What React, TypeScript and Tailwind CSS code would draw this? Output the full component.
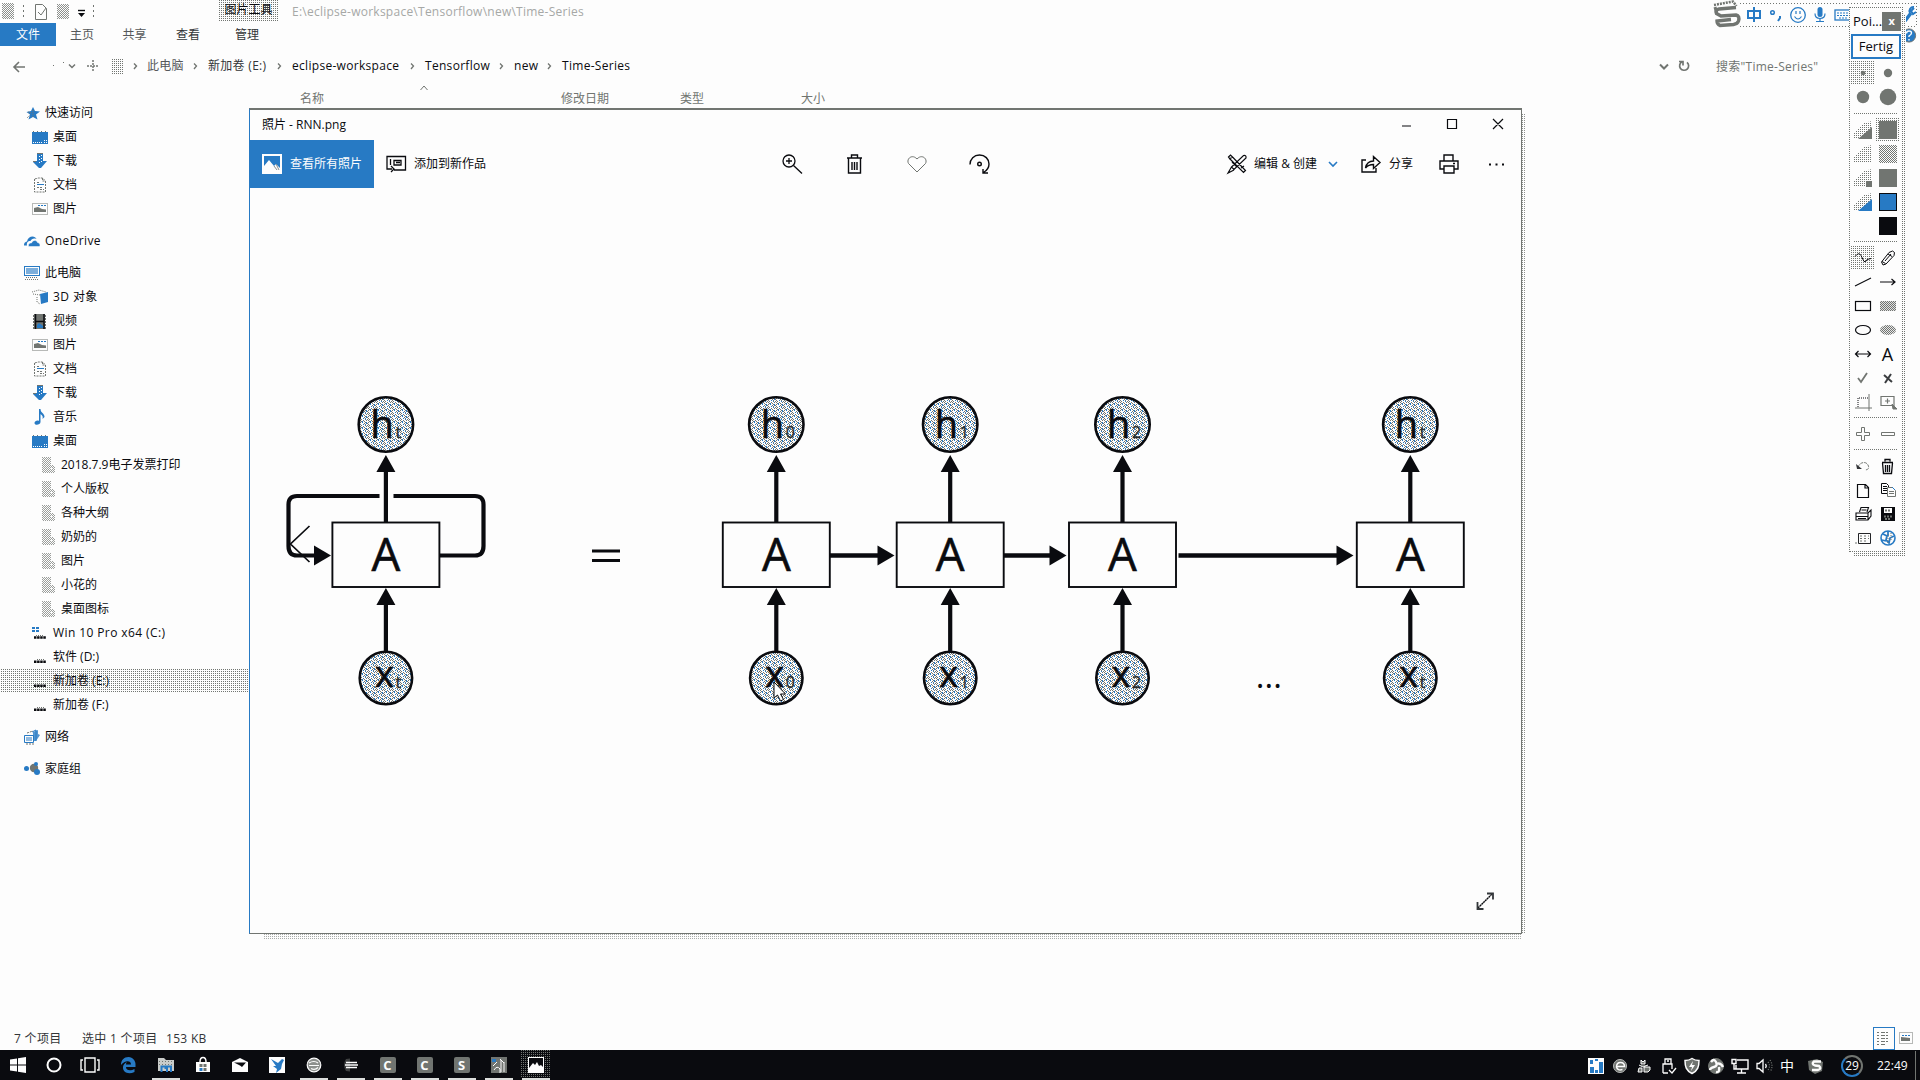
import React from "react";

const INK = "#0a0b0f";
const BLUE = "#277ac4";
const GRAY = "#717571";
const PAPER = "#fdfdfd";

const SPARSE =
  "bg-[conic-gradient(#717571_25%,#fdfdfd_0)] bg-[length:2px_2px]";

function Patterns() {
  return (
    <svg width="0" height="0" className="absolute" shapeRendering="crispEdges">
      <defs>
        <pattern id="check" width="2" height="2" patternUnits="userSpaceOnUse">
          <rect width="1" height="1" fill={GRAY} />
          <rect x="1" y="1" width="1" height="1" fill={GRAY} />
        </pattern>
        <pattern id="dots" width="4" height="4" patternUnits="userSpaceOnUse">
          <path d="M0 0h1v1H0zM2 2h1v1H2zM2 0h1v1H2zM0 2h1v1H0z" fill={GRAY} />
        </pattern>
        <pattern id="node" width="8" height="6" patternUnits="userSpaceOnUse">
          <rect width="8" height="6" fill={PAPER} />
          <path d="M0 0h1v1H0zM3 0h1v1H3zM6 0h1v1H6zM1 1h1v1H1zM4 1h1v1H4zM0 2h1v1H0zM5 2h1v1H5zM4 3h1v1H4zM7 3h1v1H7zM0 4h1v1H0zM5 4h1v1H5zM1 5h1v1H1zM7 5h1v1H7z" fill={GRAY} />
          <path d="M2 1h1v2H2zM6 2h1v2H6zM3 4h1v1H3zM5 5h1v1H5z" fill={BLUE} />
        </pattern>
      </defs>
    </svg>
  );
}

type IconProps = { w?: number; h?: number; children: React.ReactNode; className?: string; sw?: number; color?: string };
function Ico({ w = 16, h = 16, children, className = "", sw = 1, color = INK }: IconProps) {
  return (
    <svg width={w} height={h} viewBox={`0 0 ${w} ${h}`} fill="none" stroke={color} strokeWidth={sw} className={`shrink-0 overflow-visible ${className}`}>
      {children}
    </svg>
  );
}

/* ---------- navigation pane ---------- */

function NavIcon({ kind }: { kind: string }) {
  switch (kind) {
    case "star":
      return (
        <Ico>
          <path d="M9 2l2 4 5 .5-4 3 1.500 5L9 12l-4.500 2.500L6 9.500 2.500 7 7 6z" fill={BLUE} stroke="none" />
          <path d="M3 13l3-3M4 7l3 1M9 5v8" stroke={GRAY} strokeDasharray="1 1" />
        </Ico>
      );
    case "desktop":
      return (
        <Ico>
          <rect x="0" y="3" width="16" height="12" fill={BLUE} stroke="none" />
          <path d="M1 2.500h14" stroke={GRAY} strokeDasharray="1 3" />
          <path d="M1 13.500h10M12.500 11v3M14.500 11v3" stroke={PAPER} strokeDasharray="1 1" />
        </Ico>
      );
    case "down":
      return (
        <Ico>
          <path d="M5 1h6v7h4l-6 7H7L1 9V8h4z" fill={BLUE} stroke="none" />
          <path d="M7.500 3v8M9.500 2v8" stroke={PAPER} strokeDasharray="1 2" />
          <path d="M5 .5h6M1 8.500h3" stroke={GRAY} />
        </Ico>
      );
    case "doc":
      return (
        <Ico>
          <path d="M2.500 2v13h11V4l-3-3h-4z" stroke={GRAY} strokeDasharray="2 1" />
          <path d="M10.500 1v3h3M5 5.500h3M5 10.500h6M8 12.500h4" stroke={GRAY} strokeDasharray="2 1" />
          <path d="M5 7.500h7" stroke={BLUE} />
        </Ico>
      );
    case "picture":
      return (
        <Ico>
          <path d="M.5 2.500h15v11H.5z" stroke={GRAY} strokeDasharray="1 1" />
          <path d="M6 4.500h8" stroke={BLUE} strokeDasharray="2 1" />
          <path d="M2 7l4-1 4 2 4 .5v2.500H2z" fill={GRAY} stroke="none" />
        </Ico>
      );
    case "onedrive":
      return (
        <Ico>
          <path d="M0 12.500C0 9 2 9 3 8.500 4 2.500 11 2 12.500 6c-3-1-5 0-6 2C3.500 8 2.500 10 3 12.500z" fill={BLUE} stroke="none" />
          <path d="M4.500 13.500c-.5-2.500 1-4 3-3.500 1-3 5-3.500 6-.5 2.500 0 3.500 4 1.500 4z" fill={BLUE} stroke={PAPER} strokeWidth=".5" />
        </Ico>
      );
    case "pc":
      return (
        <Ico>
          <rect x=".5" y="1.500" width="15" height="9" stroke={BLUE} />
          <rect x="2" y="3" width="12" height="6" fill={BLUE} opacity=".6" stroke="none" />
          <path d="M2 12.500h12M1 14.500h13" stroke={GRAY} strokeDasharray="1 1" />
        </Ico>
      );
    case "cube":
      return (
        <Ico>
          <path d="M8 5l8-2v10l-7 2z" fill={BLUE} stroke="none" />
          <path d="M0 3l7-2 7 2M1 5l7 1M5 8v5l3 2" stroke={GRAY} strokeDasharray="1 1" />
        </Ico>
      );
    case "video":
      return (
        <Ico>
          <rect x="1" y="1" width="13" height="15" fill={GRAY} stroke="none" />
          <path d="M3.500 1v15M12 1v15M3 8.500h9" strokeWidth="1.500" />
          <path d="M1.500 1v15M13.500 1v15" stroke={PAPER} strokeDasharray="1 2" />
          <path d="M5 12l2-2 4 3v2H5z" fill={BLUE} stroke="none" />
        </Ico>
      );
    case "music":
      return (
        <Ico>
          <path d="M7 0h1.500c0 4 4 4 4 8l-2 2c1-3-1-4-2-5v8c0 3-6 4-6 1 0-2 3-3 4.500-2z" fill={BLUE} stroke="none" />
        </Ico>
      );
    case "folder":
      return (
        <Ico w={13} h={16}>
          <path d="M0 0h9v6l4 4v6H0z" fill="url(#check)" opacity=".7" stroke="none" />
          <path d="M9.500 7v6" stroke={PAPER} strokeDasharray="2 2" />
        </Ico>
      );
    case "win":
      return (
        <Ico>
          <path d="M0 2h3v2H0zM4 2h3v2H4zM0 5h3v2H0zM4 5h3v2H4z" fill={BLUE} stroke="none" />
          <path d="M4 10.500h8" stroke={GRAY} strokeDasharray="1 1" />
          <path d="M2 12.500h12" strokeWidth="2.500" stroke={INK} strokeDasharray="2.500 .6" />
        </Ico>
      );
    case "drive":
      return (
        <Ico>
          <path d="M5 10.500h7" stroke={GRAY} strokeDasharray="1 1" />
          <path d="M2 12.800h12" strokeWidth="2.500" strokeDasharray="2.500 .6" />
        </Ico>
      );
    case "network":
      return (
        <Ico>
          <path d="M.5 6.500h9v7h-9zM8 3l4-2v11" stroke={BLUE} />
          <path d="M2 8h6v4H2z" fill={BLUE} opacity=".5" stroke="none" />
          <path d="M9 3l5-2v4l2 1-4 6H9z" fill={BLUE} opacity=".8" stroke="none" />
          <path d="M3 4l6-2M2 15h9" stroke={GRAY} strokeDasharray="2 1" />
        </Ico>
      );
    default:
      return (
        <Ico>
          <circle cx="2.500" cy="7.500" r="2.500" fill={BLUE} stroke="none" />
          <circle cx="10" cy="7" r="4.200" fill={GRAY} stroke="none" />
          <circle cx="12" cy="3" r="2" fill={BLUE} stroke="none" />
          <circle cx="13" cy="11" r="3" fill={BLUE} stroke="none" />
        </Ico>
      );
  }
}

type NavRow = { icon: string; label: string; level: number; top?: boolean; wide?: boolean; sel?: boolean };
const NAV: NavRow[] = [
  { icon: "star", label: "快速访问", level: 0 },
  { icon: "desktop", label: "桌面", level: 1 },
  { icon: "down", label: "下载", level: 1 },
  { icon: "doc", label: "文档", level: 1 },
  { icon: "picture", label: "图片", level: 1 },
  { icon: "onedrive", label: "OneDrive", level: 0, top: true, wide: true },
  { icon: "pc", label: "此电脑", level: 0, top: true },
  { icon: "cube", label: "3D 对象", level: 1, wide: true },
  { icon: "video", label: "视频", level: 1 },
  { icon: "picture", label: "图片", level: 1 },
  { icon: "doc", label: "文档", level: 1 },
  { icon: "down", label: "下载", level: 1 },
  { icon: "music", label: "音乐", level: 1 },
  { icon: "desktop", label: "桌面", level: 1 },
  { icon: "folder", label: "2018.7.9电子发票打印", level: 2 },
  { icon: "folder", label: "个人版权", level: 2 },
  { icon: "folder", label: "各种大纲", level: 2 },
  { icon: "folder", label: "奶奶的", level: 2 },
  { icon: "folder", label: "图片", level: 2 },
  { icon: "folder", label: "小花的", level: 2 },
  { icon: "folder", label: "桌面图标", level: 2 },
  { icon: "win", label: "Win 10 Pro x64 (C:)", level: 1, wide: true },
  { icon: "drive", label: "软件 (D:)", level: 1 },
  { icon: "drive", label: "新加卷 (E:)", level: 1, sel: true },
  { icon: "drive", label: "新加卷 (F:)", level: 1 },
  { icon: "network", label: "网络", level: 0, top: true },
  { icon: "home", label: "家庭组", level: 0, top: true },
];
const INDENT = ["pl-[24px] gap-[5px]", "pl-[32px] gap-[5px]", "pl-[42px] gap-[6px]"];

function NavPane() {
  return (
    <nav className="w-[250px] shrink-0">
      {NAV.map((r, i) => (
        <div key={i} className={`flex h-6 items-center ${r.top ? "mt-2" : ""} ${INDENT[r.level]} ${r.sel ? "bg-[conic-gradient(#717571_25%,#fdfdfd_0)] bg-[length:2px_2px]" : ""}`}>
          <NavIcon kind={r.icon} />
          <span className={`whitespace-nowrap ${r.wide ? "tracking-[0.4px]" : ""}`}>{r.label}</span>
        </div>
      ))}
    </nav>
  );
}

/* ---------- explorer chrome ---------- */

function TitleRow() {
  return (
    <div className="flex h-[23px] items-start">
      <div className="flex w-[218px] items-center pt-[3px]">
        <Ico w={100} h={20}>
          <rect x="2" y="0" width="12" height="16" fill="url(#check)" opacity=".8" stroke="none" />
          <path d="M23.500 2v14M93.500 2v14" stroke={GRAY} strokeDasharray="2 3" />
          <path d="M35.500 1.500h7l4 4v11h-11z" stroke={GRAY} />
          <path d="M38 9l3 3 5-7" stroke={GRAY} />
          <rect x="57" y="1" width="12" height="15" fill="url(#check)" opacity=".8" stroke="none" />
          <path d="M78 7.500h7" strokeWidth="1.400" />
          <path d="M78 10h7l-3.500 4z" fill={INK} stroke="none" />
        </Ico>
      </div>
      <div className={`flex h-[22px] w-[61px] justify-center ${SPARSE}`}>
        <span className="h-5 leading-[20px]">图片工具</span>
      </div>
      <div className="pt-[3px] pl-[13px] leading-[18px] tracking-[0.25px] text-[#a6a8a6]">E:\eclipse-workspace\Tensorflow\new\Time-Series</div>
    </div>
  );
}

function RibbonTabs() {
  return (
    <div className="flex h-[23px] items-center">
      <div className="flex h-full w-14 items-center justify-center bg-[#277ac4] text-[#fdfdfd]">文件</div>
      <div className="flex w-[52px] justify-center pt-px text-[#55585a]">主页</div>
      <div className="flex w-[53px] justify-center pt-px text-[#55585a]">共享</div>
      <div className="flex w-[54px] justify-center pt-px text-[#333538]">查看</div>
      <div className="flex w-[64px] justify-center pt-px text-[#333538]">管理</div>
    </div>
  );
}

const CRUMBS = [
  ["此电脑", "w-[61px] text-[#55585a]"],
  ["新加卷 (E:)", "w-[84px] text-[#333538]"],
  ["eclipse-workspace", "w-[133px]"],
  ["Tensorflow", "w-[89px]"],
  ["new", "w-[48px]"],
];

function AddressRow() {
  return (
    <div className="flex h-10 items-center">
      <Ico w={147} h={22} color={GRAY}>
        <path d="M25 12H14M19 7l-5 5 5 5" strokeWidth="1.600" />
        <path d="M53 10.500h1M63 7.500h1" />
        <path d="M69 9.500l3 3 3-3" strokeWidth="1.500" />
        <path d="M93 5v12M87 11h11" strokeDasharray="2 1" strokeWidth="1.500" />
        <rect x="111" y="3" width="12" height="16" fill="url(#dots)" stroke="none" />
        <path d="M134 8.500l2.500 2.500-2.500 3" strokeWidth="1.400" />
      </Ico>
      {CRUMBS.map(([t, w]) => (
        <div key={t} className={`flex shrink-0 items-center justify-between pr-[10px] ${w}`}>
          <span className="tracking-[0.3px] whitespace-nowrap">{t}</span>
          <Ico w={5} h={8} color={GRAY} sw={1.3}>
            <path d="M1 1.500l2.500 2.500L1 7" />
          </Ico>
        </div>
      ))}
      <span className="tracking-[0.3px]">Time-Series</span>
      <div className="ml-auto flex items-center text-[#717571]">
        <Ico w={12} h={12} color={GRAY} sw={2}>
          <path d="M2 4.500l4 4 4-4" />
        </Ico>
        <Ico w={12} h={12} color={GRAY} sw={1.7} className="ml-2">
          <path d="M4 1.800a4.500 4.500 0 1 0 5 .5M1 1.500h4v4" />
        </Ico>
        <span className="ml-[26px] w-[204px] pt-px tracking-[0.25px]">搜索"Time-Series"</span>
      </div>
    </div>
  );
}

function ColumnHeads() {
  return (
    <div className="-mb-[7px] flex h-[22px] items-end pl-[300px] text-[#717571]">
      <span className="w-[117px] leading-[18px]">名称</span>
      <span className="w-[144px] self-start">
        <Ico w={12} h={10} color={GRAY}>
          <path d="M3.500 4l3.500-4 3.500 4" />
        </Ico>
      </span>
      <span className="w-[119px] leading-[18px]">修改日期</span>
      <span className="w-[121px] leading-[18px]">类型</span>
      <span className="w-[60px] leading-[18px]">大小</span>
    </div>
  );
}

function StatusBar() {
  return (
    <div className="flex h-6 items-center pr-[7px] pl-[14px] text-[#333538]">
      <span className="w-[68px] pt-0.5 tracking-[0.3px]">7 个项目</span>
      <span className="w-[84px] pt-0.5 tracking-[0.3px]">选中 1 个项目</span>
      <span className="pt-0.5 tracking-[0.3px]">153 KB</span>
      <div className="ml-auto flex items-center gap-[4px]">
        <Ico w={22} h={23} color={BLUE}>
          <rect x=".5" y=".5" width="21" height="22" />
          <path d="M4 5.500h13M4 8.500h13M4 11.500h13M4 14.500h13M4 17.500h9" stroke={GRAY} strokeDasharray="2 2 4 1" />
        </Ico>
        <Ico w={14} h={12} color={GRAY}>
          <path d="M.5.500h13v11H.5z" strokeDasharray="1 1" />
          <path d="M3 3.500h8" stroke={BLUE} strokeDasharray="2 1" />
          <path d="M2 5l9 1v3H2z" fill={GRAY} stroke="none" />
        </Ico>
      </div>
    </div>
  );
}

/* ---------- photo viewer ---------- */

function PhotoToolbar() {
  return (
    <div className="flex h-12 shrink-0 items-center">
      <div className="flex h-full w-[124px] items-center bg-[#277ac4] pl-[12px] text-[#fdfdfd]">
        <Ico w={20} h={20}>
          <rect width="20" height="20" fill={PAPER} stroke="none" />
          <path d="M2 2h16v12l-4-4-2 2-5-6-5 6z" fill={BLUE} stroke="none" />
          <path d="M12 12l3 4M14 10l3 6" stroke={GRAY} strokeWidth=".8" />
        </Ico>
        <span className="ml-2">查看所有照片</span>
      </div>
      <Ico w={20} h={18} sw={1.3} className="ml-3">
        <path d="M4 1.500h15.500V15H8M1 6V1.500h3M1 5v9h5M5 11l3 3-3 3M4.500 4v6M8 5.500h7v4.500H8zM10 7.500h4" />
      </Ico>
      <span className="ml-2">添加到新作品</span>
      <Ico w={21} h={20} className="ml-[296px]" sw={1.3}>
        <circle cx="7" cy="7" r="6" />
        <path d="M11.500 11.500L20 19.500M4 7h6M7 4v6" />
      </Ico>
      <Ico w={17} h={20} className="ml-[43px]" sw={1.4}>
        <path d="M1 4h15M5.500 3.500V1h6v2.500M2.500 4.500V19h12V4.500M6 8v8M8.500 8v8M11 8v8" />
      </Ico>
      <Ico w={20} h={18} className="ml-[44px]" color={GRAY}>
        <path d="M10 17L1.500 8.500C-1 4 5-1.500 10 4c5-5.500 11 0 8.500 4.500z" />
      </Ico>
      <Ico w={21} h={20} className="ml-[42px]" sw={1.4}>
        <path d="M1 10.500C1 5 5 1 10.500 1S20 5 20 10c0 4-2 6.500-5.500 8.500M19 19h-5v-4" />
        <circle cx="10.500" cy="10" r="1.800" />
      </Ico>
      <Ico w={20} h={20} className="ml-[237px]" sw={1.2}>
        <path d="M1.500 3l2-2L6 3.500l12.500 13-2 2L4 6zM16.500 1.500q3-.5 2.500 2.500L7 15.500l-2.500-2.500zM4.500 13L1 19l6-3M2 5l4-2M14 14l3-2M5 8l5 5" />
      </Ico>
      <span className="ml-[7px] w-[68px] whitespace-nowrap">编辑 &amp; 创建</span>
      <Ico w={10} h={6} className="ml-[6px]" sw={1.6} color={BLUE}>
        <path d="M1 1l4 4 4-4" />
      </Ico>
      <Ico w={20} h={18} className="ml-[23px]" sw={1.4}>
        <path d="M5 5H1v12h14v-4M4.500 13c1-5 4-7 8-7V1.500L19 7.500l-6.500 6V9.500c-4 0-6 1-8 3.500z" />
      </Ico>
      <span className="ml-2">分享</span>
      <Ico w={20} h={20} className="ml-[26px]" sw={1.4}>
        <path d="M5 7V1h9v6M5 15H1V7h18v8h-4M5 12h10v7H5zM14 9.500h2" />
      </Ico>
      <Ico w={16} h={4} className="ml-[30px]">
        <path d="M0 1.500h2v2H0zM6.500 1.500h2v2h-2zM13 1.500h2v2h-2z" fill={INK} stroke="none" />
      </Ico>
    </div>
  );
}

function Cell({ cx, sub }: { cx: number; sub: string }) {
  return (
    <g>
      <circle cx={cx} cy="424.500" r="27.200" fill="url(#node)" strokeWidth="2.600" />
      <circle cx={cx} cy="678" r="26.200" fill="url(#node)" strokeWidth="2.600" />
      <rect x={cx - 53.5} y="522.500" width="107" height="64.500" strokeWidth="1.900" />
      <path d={`M${cx} 522V470M${cx} 651V603`} strokeWidth="4.200" />
      <path d={`M${cx} 455l9.500 17h-19zM${cx} 588l9.500 17h-19z`} fill={INK} stroke="none" />
      <g fill={INK} strokeWidth=".6">
        <text x={cx} y="570.500" fontSize="45.500" textAnchor="middle">A</text>
        <text x={cx - 15.5} y="437.500" fontSize="38">h</text>
        <text x={cx - 11} y="687" fontSize="36">x</text>
        <text x={cx + 9.5} y="438" fontSize="16" fill="#333835" strokeWidth=".3">{sub}</text>
        <text x={cx + 9.5} y="688" fontSize="16" fill="#333835" strokeWidth=".3">{sub}</text>
      </g>
    </g>
  );
}

function Arrow({ from, tip }: { from: number; tip: number }) {
  return (
    <g>
      <path d={`M${from} 555.500H${tip - 15}`} strokeWidth="4.400" />
      <path d={`M${tip} 555.500l-17 10v-20z`} fill={INK} stroke="none" />
    </g>
  );
}

function Diagram() {
  return (
    <svg viewBox="250 188 1270 744" width="1270" height="744" fill="none" stroke={INK} fontFamily="'Open Sans', 'Liberation Sans', sans-serif" className="shrink-0">
      <path d="M379.500 496H297q-8.500 0-8.500 8.500V546q0 9.500 8.500 9.500h19M393.500 496H475q8.500 0 8.500 8.500V546q0 9.500-8.500 9.500h-35" strokeWidth="4.200" />
      <path d="M331 555.500l-17 10v-20z" fill={INK} stroke="none" />
      <path d="M309.500 526L290.500 544l19 18" strokeWidth="1.700" />
      <path d="M592 551h28M592 560.500h28" strokeWidth="3.200" />
      <Cell cx={385.9} sub="t" />
      <Cell cx={776.3} sub="0" />
      <Cell cx={950.2} sub="1" />
      <Cell cx={1122.5} sub="2" />
      <Cell cx={1410.3} sub="t" />
      <Arrow from={830} tip={894.5} />
      <Arrow from={1004} tip={1066.5} />
      <Arrow from={1178.5} tip={1353.5} />
      <text x="1255.800" y="687.500" fontSize="33" fill={INK} stroke="none">...</text>
      <path d="M1478 908l14-14" strokeDasharray="2 .5" strokeWidth="1.400" />
      <path d="M1487 893.500h6v6M1477.500 902v7h6" strokeWidth="1.800" stroke="#33373a" />
      <path d="M774 682v16l3.500-3 3 6 3-1.500-3-5.500h5z" fill={PAPER} strokeWidth="1" />
    </svg>
  );
}

function PhotoWindow() {
  return (
    <div className="absolute top-[108px] left-[249px] h-[832px] w-[1277px]">
      <div className={`absolute top-[6px] left-[14px] h-[825px] w-[1258px] opacity-60 ${SPARSE}`} />
      <div className={`absolute top-[6px] right-px h-[820px] w-[10px] opacity-80 ${SPARSE}`} />
      <div className="relative flex h-[826px] w-[1273px] flex-col overflow-hidden border border-t-2 border-[#717571] border-l-[#277ac4] bg-[#fdfdfd]">
        <div className="flex h-[30px] shrink-0 items-center pl-3">
          <span>照片 - RNN.png</span>
          <Ico w={102} h={12} className="mr-[17px] ml-auto" sw={1.2}>
            <path d="M0 7h9M45.500 .500h9v9h-9zM91 0l10 10M101 0L91 10" />
          </Ico>
        </div>
        <PhotoToolbar />
        <Diagram />
      </div>
    </div>
  );
}

/* ---------- IME strip ---------- */

function ImeStrip() {
  return (
    <div className="absolute top-[3px] left-[1712px] h-6 w-[205px]">
      <Ico w={205} h={45} color={GRAY}>
        <path d="M28 .5h177M28 23.500h177M204.500 0v24" strokeDasharray="1 2" />
        <path d="M2 2L21-1.500l3.500 4.500" strokeWidth="2.500" strokeDasharray="2 1" />
        <path d="M24 4.500L7 6q-4 1-2.500 4.500L9 13l15-1q4 1 2.500 6-1 3-5 3.500L8 22.500q-3-1.500-3-4.500l14-1.500" strokeWidth="3.400" />
        <path d="M3 4l2 7" strokeWidth="3" />
        <g stroke={BLUE} strokeWidth="2">
          <path d="M36 8h12v7H36zM42 4v15" />
          <circle cx="60.500" cy="9.500" r="1.800" strokeWidth="1.500" />
          <path d="M68 13v2l-2 3" />
          <circle cx="86" cy="12" r="7.300" strokeWidth="1.300" />
          <path d="M82.500 13.500q3.500 5 7 0M84 8v3M88 8v3" strokeWidth="1.200" />
          <path d="M108 6.500v5" strokeWidth="5" strokeLinecap="round" />
          <path d="M103 10.500q0 5 5 5t5-5M108 15.500v3M104 18.500h8" strokeWidth="1.200" />
          <rect x="123" y="7" width="16" height="10" strokeWidth="1.300" />
          <path d="M125 10h12M125 12.500h12M127 15h8" strokeWidth="1.200" strokeDasharray="2 1" />
          <path d="M193 18l6-8" strokeWidth="3.500" />
          <path d="M202 5l-3 3 2 3 3-2M202 4a4 4 0 0 0-4 6" />
        </g>
        <circle cx="197" cy="32.500" r="6.600" fill={BLUE} stroke={GRAY} />
        <path d="M194.500 30.500q0-2.500 2.500-2.500t2.500 2q0 1.500-2.500 3v1M197 36v1.500" stroke={PAPER} strokeWidth="1.400" />
      </Ico>
    </div>
  );
}

/* ---------- drawing tool palette ---------- */

function Shade({ fill }: { fill: string }) {
  return (
    <Ico w={18} h={18}>
      <path d="M18 0v18H0v-6L10 2z" fill="url(#dots)" stroke="none" />
      <path d="M18 6v12H4z" fill={fill} stroke="none" />
    </Ico>
  );
}
function Swatch({ fill, stroke = "none" }: { fill: string; stroke?: string }) {
  return (
    <Ico w={18} h={18}>
      <rect x={stroke === "none" ? 0 : 0.5} y={stroke === "none" ? 0 : 0.5} width={stroke === "none" ? 18 : 17} height={stroke === "none" ? 18 : 17} fill={fill} stroke={stroke} />
    </Ico>
  );
}
const Dot = ({ r }: { r: number }) => (
  <Ico w={18} h={18}>
    <circle cx="9" cy="9" r={r} fill={GRAY} stroke="none" />
  </Ico>
);
const Sep = () => <div className="mx-[4px] h-px shrink-0 bg-[repeating-linear-gradient(90deg,#717571_0_1px,#fdfdfd_1px_2px)]" />;

function Grid({ children }: { children: React.ReactNode }) {
  return <div className="grid auto-rows-[24px] grid-cols-[25px_25px] place-items-center">{children}</div>;
}
const Held = ({ children }: { children: React.ReactNode }) => (
  <div className={`flex h-6 w-[25px] items-center justify-center ${SPARSE}`}>{children}</div>
);

function Palette() {
  return (
    <div className="absolute top-[7px] left-[1849px] h-[549px] w-[57px]">
      <div className={`absolute top-2 right-0 bottom-0 left-1 ${SPARSE}`} />
      <div className="relative flex h-[545px] w-[54px] flex-col border border-dotted border-[#717571] bg-[#fdfdfd]">
        <div className="flex h-[26px] shrink-0 items-center justify-between pr-px pl-[3px]">
          <span className="text-[13px]">Poi...</span>
          <span className="flex h-[19px] w-[19px] items-center justify-center bg-[#717571] pb-[2px] text-[11px] leading-none font-bold text-[#fdfdfd]">x</span>
        </div>
        <div className="mx-px flex h-[25px] shrink-0 items-center justify-center border-2 border-[#277ac4] pb-px text-[13px]">Fertig</div>
        <div className="mt-[2px] mb-[4px]">
          <Grid>
            <Held><Dot r={2.3} /></Held>
            <Dot r={4.2} />
            <Dot r={6.2} />
            <Dot r={8.3} />
          </Grid>
        </div>
        <Sep />
        <div className="mt-1 mb-[3px]">
          <Grid>
            <Shade fill={GRAY} />
            <Held><Swatch fill={GRAY} /></Held>
            <Shade fill="none" />
            <Swatch fill="url(#check)" />
            <Ico w={18} h={18}>
              <path d="M18 0v18H0v-6L10 2z" fill="url(#dots)" stroke="none" />
              <path d="M12 12h6v6h-6z" fill={GRAY} stroke="none" />
            </Ico>
            <Swatch fill={GRAY} />
            <Shade fill={BLUE} />
            <Swatch fill={BLUE} stroke={INK} />
            <span />
            <Swatch fill={INK} stroke={INK} />
          </Grid>
        </div>
        <Sep />
        <div className="mt-[4px] mb-[3px]">
          <Grid>
            <Held>
              <Ico><path d="M0 6.500q4-5 6-1t3 6q2 1 3-2l4-1" /></Ico>
            </Held>
            <Ico><path d="M1.500 12l7.500-9.500 3.500-1.500 2 1.500-.5 3L6 14l-3 1zM8 4l4 2.500M2 11.500l3.500 2M5 11l6-7" /></Ico>
            <Ico><path d="M0 12L16 4" strokeWidth="1.200" /></Ico>
            <Ico><path d="M0 8h15M11.500 5L15 8l-3.500 3" strokeWidth="1.200" /></Ico>
            <Ico><rect x=".5" y="3.500" width="15" height="9" strokeWidth="1.200" /></Ico>
            <Ico><rect x="0" y="3" width="16" height="10" fill="url(#check)" stroke="none" /><rect x="0" y="3" width="16" height="10" fill={GRAY} opacity=".2" stroke="none" /></Ico>
            <Ico><ellipse cx="8" cy="8" rx="7.500" ry="4.500" strokeWidth="1.200" /></Ico>
            <Ico><ellipse cx="8" cy="8" rx="8" ry="5" fill="url(#check)" stroke="none" /><ellipse cx="8" cy="8" rx="8" ry="5" fill={GRAY} opacity=".15" stroke="none" /></Ico>
            <Ico><path d="M0 8h16M3.500 5L.5 8l3 3M12.500 5l3 3-3 3" strokeWidth="1.200" /></Ico>
            <span className="text-[18px] leading-none">A</span>
            <Ico color={GRAY}><path d="M3 8l3 4 6-9" strokeWidth="1.800" /></Ico>
            <Ico><path d="M4 5l8 7M11 4l-6 9" strokeWidth="2" stroke="#3a3d40" /></Ico>
            <Ico color={GRAY}><path d="M0 14h17M14 0v17" /><path d="M3 13V4h10" stroke={INK} strokeDasharray="1 1" /></Ico>
            <Ico color={GRAY}><path d="M1 2.500h13v9H1zM7.500 4.500v5M5 7h5" strokeWidth="1.200" /><path d="M12 10l5 5h-4z" fill={GRAY} /></Ico>
          </Grid>
        </div>
        <Sep />
        <div className="mt-1 mb-[3px]">
          <Grid>
            <Ico color={GRAY}><path d="M6.500 1.500h3v5h5v3h-5v5h-3v-5h-5v-3h5z" /></Ico>
            <Ico color={GRAY}><path d="M1.500 6.500h13v3h-13z" /></Ico>
          </Grid>
        </div>
        <Sep />
        <div className="mt-1">
          <Grid>
            <Ico color={GRAY}><path d="M3 9c2-5 8-6 10-2s-1 5-3 5" strokeDasharray="3 1" /><path d="M1 6l1 5 5 0z" fill="#333538" stroke="none" /></Ico>
            <Ico><path d="M2 4.500h11M5 3.500V1.500h5v2M2.500 5l1 10.500h8l1-10.500M5.500 7v7M7.500 7v7M9.500 7v7" strokeWidth="1.300" /></Ico>
            <Ico><path d="M2.500 2.500h8l3 3v10h-11zM10 2.500v3.500h3.500" strokeWidth="1.200" /></Ico>
            <Ico><path d="M1.500 1.500h5l2 2v8h-7zM3 4.500h4M3 6.500h4M3 8.500h4" /><path d="M7.500 5.500h5l3 3v6h-8z" fill={PAPER} stroke={GRAY} /><path d="M9 9.500h5M9 11.500h5" stroke={GRAY} /><path d="M12 5l3 3" stroke={BLUE} /></Ico>
            <Ico><path d="M4.500 6L6 1.500h7.500L12 6M1 7h12l3-3v6l-3 4H1zM1 10.500h12M3 12.500h8M6.500 4h5M13 7v7" strokeWidth="1.100" /></Ico>
            <Ico><rect x="1" y="1" width="14" height="14" fill={INK} stroke="none" /><rect x="4" y="2" width="8" height="5" fill={PAPER} stroke="none" /><path d="M5 4.500h6M4 10.500h8M5 13h6" stroke={GRAY} strokeDasharray="2 1" strokeWidth="2" /></Ico>
            <Ico><path d="M3.500 3.500h12v10h-12z" strokeWidth=".9" /><path d="M5 6h9M5 8.500h9M5 11h7M0 13h4" stroke={GRAY} strokeDasharray="2 2" /></Ico>
            <Ico><circle cx="8" cy="8" r="7" stroke={BLUE} strokeWidth="1.600" /><path d="M3 4l4 2-1 4 3 3 1-5 4-2M8 1v5M2 10l4 1" stroke={BLUE} strokeWidth="1.800" /><path d="M8 4v9M11 3v8" stroke={GRAY} strokeDasharray="1 1" /></Ico>
          </Grid>
        </div>
      </div>
    </div>
  );
}

/* ---------- taskbar ---------- */

function AppTile({ letter }: { letter: string }) {
  return <span className="flex h-4 w-4 items-center justify-center rounded-[2px] bg-[#717571] text-[13px] leading-none font-bold text-[#fdfdfd]">{letter}</span>;
}

function TaskButton({ children, open, active, w = "w-[37px]" }: { children: React.ReactNode; open?: boolean; active?: boolean; w?: string }) {
  return (
    <div className={`flex h-[30px] flex-col items-center justify-between ${w}`}>
      <div className={`flex h-[28px] w-[31px] items-center justify-center pt-[2px] ${active ? "bg-[conic-gradient(#717571_25%,#0a0b0f_0)] bg-[length:2px_2px]" : ""}`}>{children}</div>
      {open && <div className="h-[2px] w-7 bg-[#dcdedc]" />}
    </div>
  );
}

function Taskbar() {
  return (
    <div className="flex h-[30px] shrink-0 items-center bg-[#0a0b0f] text-[#fdfdfd]">
      <TaskButton w="w-[36px]">
        <Ico><path d="M0 2.500l7-1v6H0zM8 1.300L16 0v7.500H8zM0 8.500h7v6l-7-1zM8 8.500h8V16l-8-1.300z" fill={PAPER} stroke="none" /></Ico>
      </TaskButton>
      <TaskButton w="w-[36px]">
        <Ico color={PAPER}><circle cx="8" cy="8" r="6.500" strokeWidth="2" /></Ico>
      </TaskButton>
      <TaskButton w="w-[36px]">
        <Ico w={20} h={16} color={PAPER} sw={1.4}><path d="M5 1h10v14H5zM3 3H1v10h2M17 3h2v10h-2" /></Ico>
      </TaskButton>
      <TaskButton w="w-[39px]">
        <Ico><path d="M1 8C1 3 4 0 8.500 0S15.500 4 15.500 7v3H6c0 4 5 4 8.500 2v3C8 18 2.500 15 3 10c.2-2 1.500-4 4-5-1 1-1 2-1 2.500h5c0-5-7-4-10 .5z" fill={BLUE} stroke="none" /></Ico>
      </TaskButton>
      <TaskButton open>
        <Ico><path d="M0 1h6l2 2h8v11H0z" fill="#c9ccca" stroke="none" /><path d="M1 4.500h14M1 7.500h14" stroke={GRAY} strokeDasharray="1 2" /><path d="M3.500 15V9.500h4V12M9 15V9.500h4V15" stroke={BLUE} strokeWidth="2" /></Ico>
      </TaskButton>
      <TaskButton>
        <Ico><path d="M1 5h14v10H1z" fill={PAPER} stroke="none" /><path d="M5 5q0-4.500 3-4.500T11 5" stroke={PAPER} strokeWidth="1.500" /><path d="M4.500 7h3v3h-3zM8.500 7h3v3h-3zM8.500 11h3v3h-3z" fill={GRAY} stroke="none" /><path d="M4.500 11h3v3h-3z" fill={BLUE} stroke="none" /></Ico>
      </TaskButton>
      <TaskButton>
        <Ico><path d="M0 5l8-4 8 4v10H0z" fill={PAPER} stroke="none" /><path d="M2 5.500h12L10 10 8 8.500z" fill={INK} stroke="none" /></Ico>
      </TaskButton>
      <TaskButton>
        <Ico><rect width="16" height="16" fill={PAPER} stroke="none" /><path d="M2 2l7 4 4-4 2 1-2 4-1 5-5 4 1-4-4-3h3z" fill={BLUE} stroke="none" /></Ico>
      </TaskButton>
      <TaskButton open>
        <Ico color={PAPER}><circle cx="8" cy="8" r="6.800" fill="#8d908d" strokeWidth="1.200" /><path d="M3 6q5-3 9 0M3 8.500h10M5 11.500q4 2 7-1" strokeWidth="1.200" /></Ico>
      </TaskButton>
      <TaskButton open>
        <Ico><path d="M3 2Q-1 8 3 14l4 .5V1.500z" fill={GRAY} opacity=".5" stroke="none" /><path d="M3 5.500h11M2 8h13M3 10.500h11" stroke={PAPER} strokeWidth="1.500" /></Ico>
      </TaskButton>
      <TaskButton open><AppTile letter="C" /></TaskButton>
      <TaskButton open><AppTile letter="C" /></TaskButton>
      <TaskButton open><AppTile letter="S" /></TaskButton>
      <TaskButton open>
        <Ico><rect width="16" height="16" fill={GRAY} stroke="none" /><path d="M2 9l4-4M3 13q3-5 6-1v4M10 3v12M13 5v10M9 2l4 4" stroke={PAPER} /><path d="M1 2h4v3H1z" fill={BLUE} stroke="none" /></Ico>
      </TaskButton>
      <TaskButton open active>
        <Ico><rect width="16" height="16" fill={PAPER} stroke="none" /><path d="M1 1h14v9l-2-2-2 1-2-4-2 3-2-2-4 5z" fill={INK} stroke="none" /></Ico>
      </TaskButton>

      <div className="ml-auto flex h-full items-center gap-2 pt-px pr-[4px]">
        <Ico><rect width="16" height="16" fill={PAPER} stroke="none" /><path d="M2 2h3v4H2zM11 4h4v11h-4zM2 9h4v6H2zM7 1h3v2H7zM7 12h3v3H7z" fill={BLUE} stroke="none" /></Ico>
        <Ico color={PAPER}><circle cx="8" cy="8" r="6.500" fill={GRAY} stroke="#b9bbb9" /><path d="M4 8.500h8.500q0-4-4-4T4.500 9q1 4 6 2.500" strokeWidth="1.500" /></Ico>
        <Ico color={PAPER}><path d="M5 2l2 2 2-2v4H5zM3 7l4 2 5-2" fill={GRAY} /><path d="M3 10h3v4H2zM8 9h6v3l-2 2H8z" fill={GRAY} stroke={PAPER} /></Ico>
        <Ico color={PAPER} sw={1.3}><path d="M5 6V1h6v5M3 15V6h9v5M3 15h5M9 12l3 3 4-5M7 3h2" /></Ico>
        <Ico color={PAPER}><path d="M8 .5q3 2 7 2c0 6-1 10-7 13C2 12.500 1 8.500 1 2.500q4 0 7-2z" fill={GRAY} strokeWidth="1.500" /><path d="M9 3l-4 6h3l-1 4 4-6H8z" fill={PAPER} stroke="none" /></Ico>
        <Ico color={PAPER}><circle cx="8" cy="8" r="7.500" fill={GRAY} stroke={GRAY} /><path d="M3 4q3-4 5 0T6 9 2 12M8 6q5-2 7 3M8 14q4 1 3-5" strokeWidth="2.400" /></Ico>
        <Ico color={PAPER} sw={1.4}><path d="M5 2h11v9H4V7M9.500 11v4M5 15h9M0 1.500h4v4H0zM2 6v5h2" /></Ico>
        <Ico color={PAPER} sw={1.3}><path d="M1 5.500h2L7 2v12l-4-3.500H1z" /><path d="M9.500 6q1.500 2 0 4" /><path d="M12 4q3 4 0 8M14 2q4 6 0 12" stroke={GRAY} strokeDasharray="1 1.500" /></Ico>
        <span className="-ml-px w-4 text-center text-[14px] leading-none">中</span>
        <Ico className="ml-[5px]" color={PAPER}><path d="M0 3l9-2 6 3-1 9-7 3-6-4z" fill={GRAY} stroke="none" /><path d="M13 3.500H6q-3 2.500 1 4l4 .5q3 2.500-1 4H4" strokeWidth="2.400" /></Ico>
        <span className="ml-[9px] flex h-[22px] w-[22px] items-center justify-center rounded-full border-[2px] border-[#717571] border-b-[#277ac4] border-l-[#277ac4] text-[12px] leading-none">29</span>
        <span className="ml-[6px] w-[31px] text-[12px] leading-none">22:49</span>
        <span className="-ml-[1px] h-full w-px bg-[#717571]" />
      </div>
    </div>
  );
}

export default function App() {
  return (
    <div className="relative flex h-[1080px] w-[1920px] flex-col overflow-hidden bg-[#fdfdfd] font-['Open_Sans','Noto_Sans_CJK_SC',sans-serif] text-[12px] leading-[18px] text-[#0a0b0f]">
      <Patterns />
      <TitleRow />
      <RibbonTabs />
      <AddressRow />
      <ColumnHeads />
      <div className="min-h-0 flex-1">
        <NavPane />
      </div>
      <StatusBar />
      <Taskbar />
      <PhotoWindow />
      <ImeStrip />
      <Palette />
    </div>
  );
}
